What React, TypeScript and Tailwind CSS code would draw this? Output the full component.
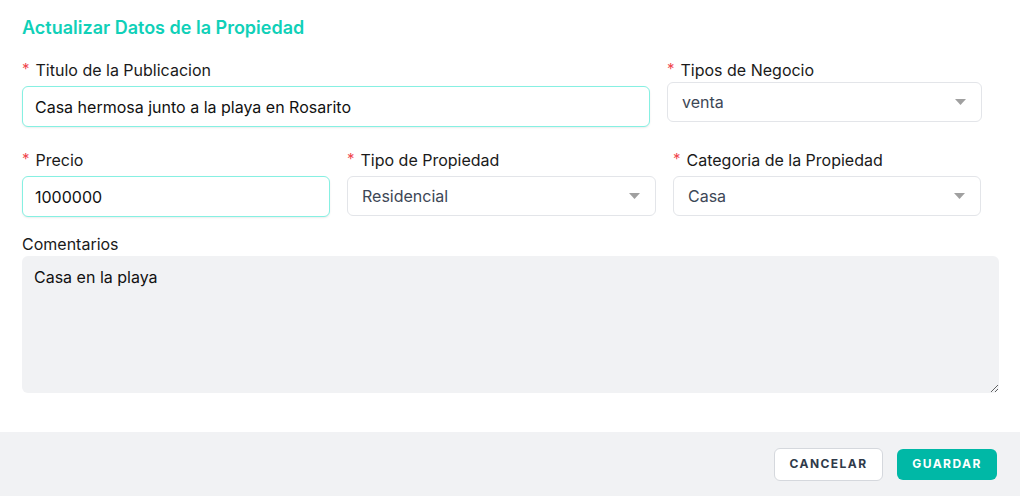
import React from 'react';

const Label: React.FC<{ text: string; required?: boolean }> = ({ text, required }) => (
  <div className="h-5 leading-5 text-[16px] text-[#1a1a1a] flex items-center">
    {required && <span className="text-[#f0484e] text-[15px] mr-[6px] -mt-[3px]">*</span>}
    <span>{text}</span>
  </div>
);

const Caret = () => (
  <svg width="11" height="6" viewBox="0 0 11 6" className="shrink-0">
    <path d="M0 0h11L5.5 6z" fill="#a0a0a0" />
  </svg>
);

const Select: React.FC<{ value: string; className?: string }> = ({ value, className }) => (
  <div
    className={`h-10 rounded-md border border-[#e3e5e9] bg-white flex items-center justify-between pl-[14px] pr-[15px] text-[16px] text-[#3d4756] ${className ?? ''}`}
  >
    <span>{value}</span>
    <Caret />
  </div>
);

const TextInput: React.FC<{ value: string; className?: string }> = ({ value, className }) => (
  <input
    readOnly
    value={value}
    className={`h-[41px] w-full rounded-md border border-[#86f0e2] shadow-[0_1px_2px_rgba(0,0,0,0.08)] bg-white px-3 text-[16px] text-[#111] outline-none ${className ?? ''}`}
    style={{ fontFamily: 'Inter, sans-serif' }}
  />
);

const App: React.FC = () => {
  return (
    <div className="w-[1020px] h-[496px] bg-white flex flex-col font-['Inter',sans-serif]">
      <div className="flex-1 pl-[22px] pr-[22px] pt-[18px]">
        <h1 className="h-5 leading-5 text-[18px] font-semibold text-[#10d0b8]">Actualizar Datos de la Propiedad</h1>

        {/* Row 1 */}
        <div className="flex gap-[17px] mt-[22px] items-start">
          <div className="w-[628px]">
            <Label text="Titulo de la Publicacion" required />
            <TextInput value="Casa hermosa junto a la playa en Rosarito" className="mt-[6px]" />
          </div>
          <div className="w-[315px]">
            <Label text="Tipos de Negocio" required />
            <Select value="venta" className="mt-[2px]" />
          </div>
        </div>

        {/* Row 2 */}
        <div className="flex gap-[17px] mt-[23px] items-start">
          <div className="w-[308px]">
            <Label text="Precio" required />
            <TextInput value="1000000" className="mt-[6px]" />
          </div>
          <div className="w-[309px]">
            <Label text="Tipo de Propiedad" required />
            <Select value="Residencial" className="mt-[6px]" />
          </div>
          <div className="w-[308px]">
            <Label text="Categoria de la Propiedad" required />
            <Select value="Casa" className="mt-[6px]" />
          </div>
        </div>

        {/* Comentarios */}
        <div className="mt-[17px] w-[977px]">
          <Label text="Comentarios" />
          <textarea
            readOnly
            value="Casa en la playa"
            className="mt-[2px] block w-full h-[137px] rounded-md bg-[#f1f2f4] px-3 pt-[9px] text-[16px] text-[#111] outline-none resize-y"
            style={{ fontFamily: 'Inter, sans-serif' }}
          />
        </div>
      </div>

      {/* Footer */}
      <div className="h-16 bg-[#f1f2f4] flex items-center justify-end gap-[14px] pr-[23px]">
        <button className="h-[33px] w-[109px] rounded-md border border-[#d5d8dd] bg-white text-[12px] font-bold tracking-[0.12em] text-[#2f3a4a]">
          CANCELAR
        </button>
        <button className="h-[31px] w-[100px] rounded-md bg-[#00b8a6] text-[12px] font-bold tracking-[0.12em] text-white">
          GUARDAR
        </button>
      </div>
    </div>
  );
};

export default App;
